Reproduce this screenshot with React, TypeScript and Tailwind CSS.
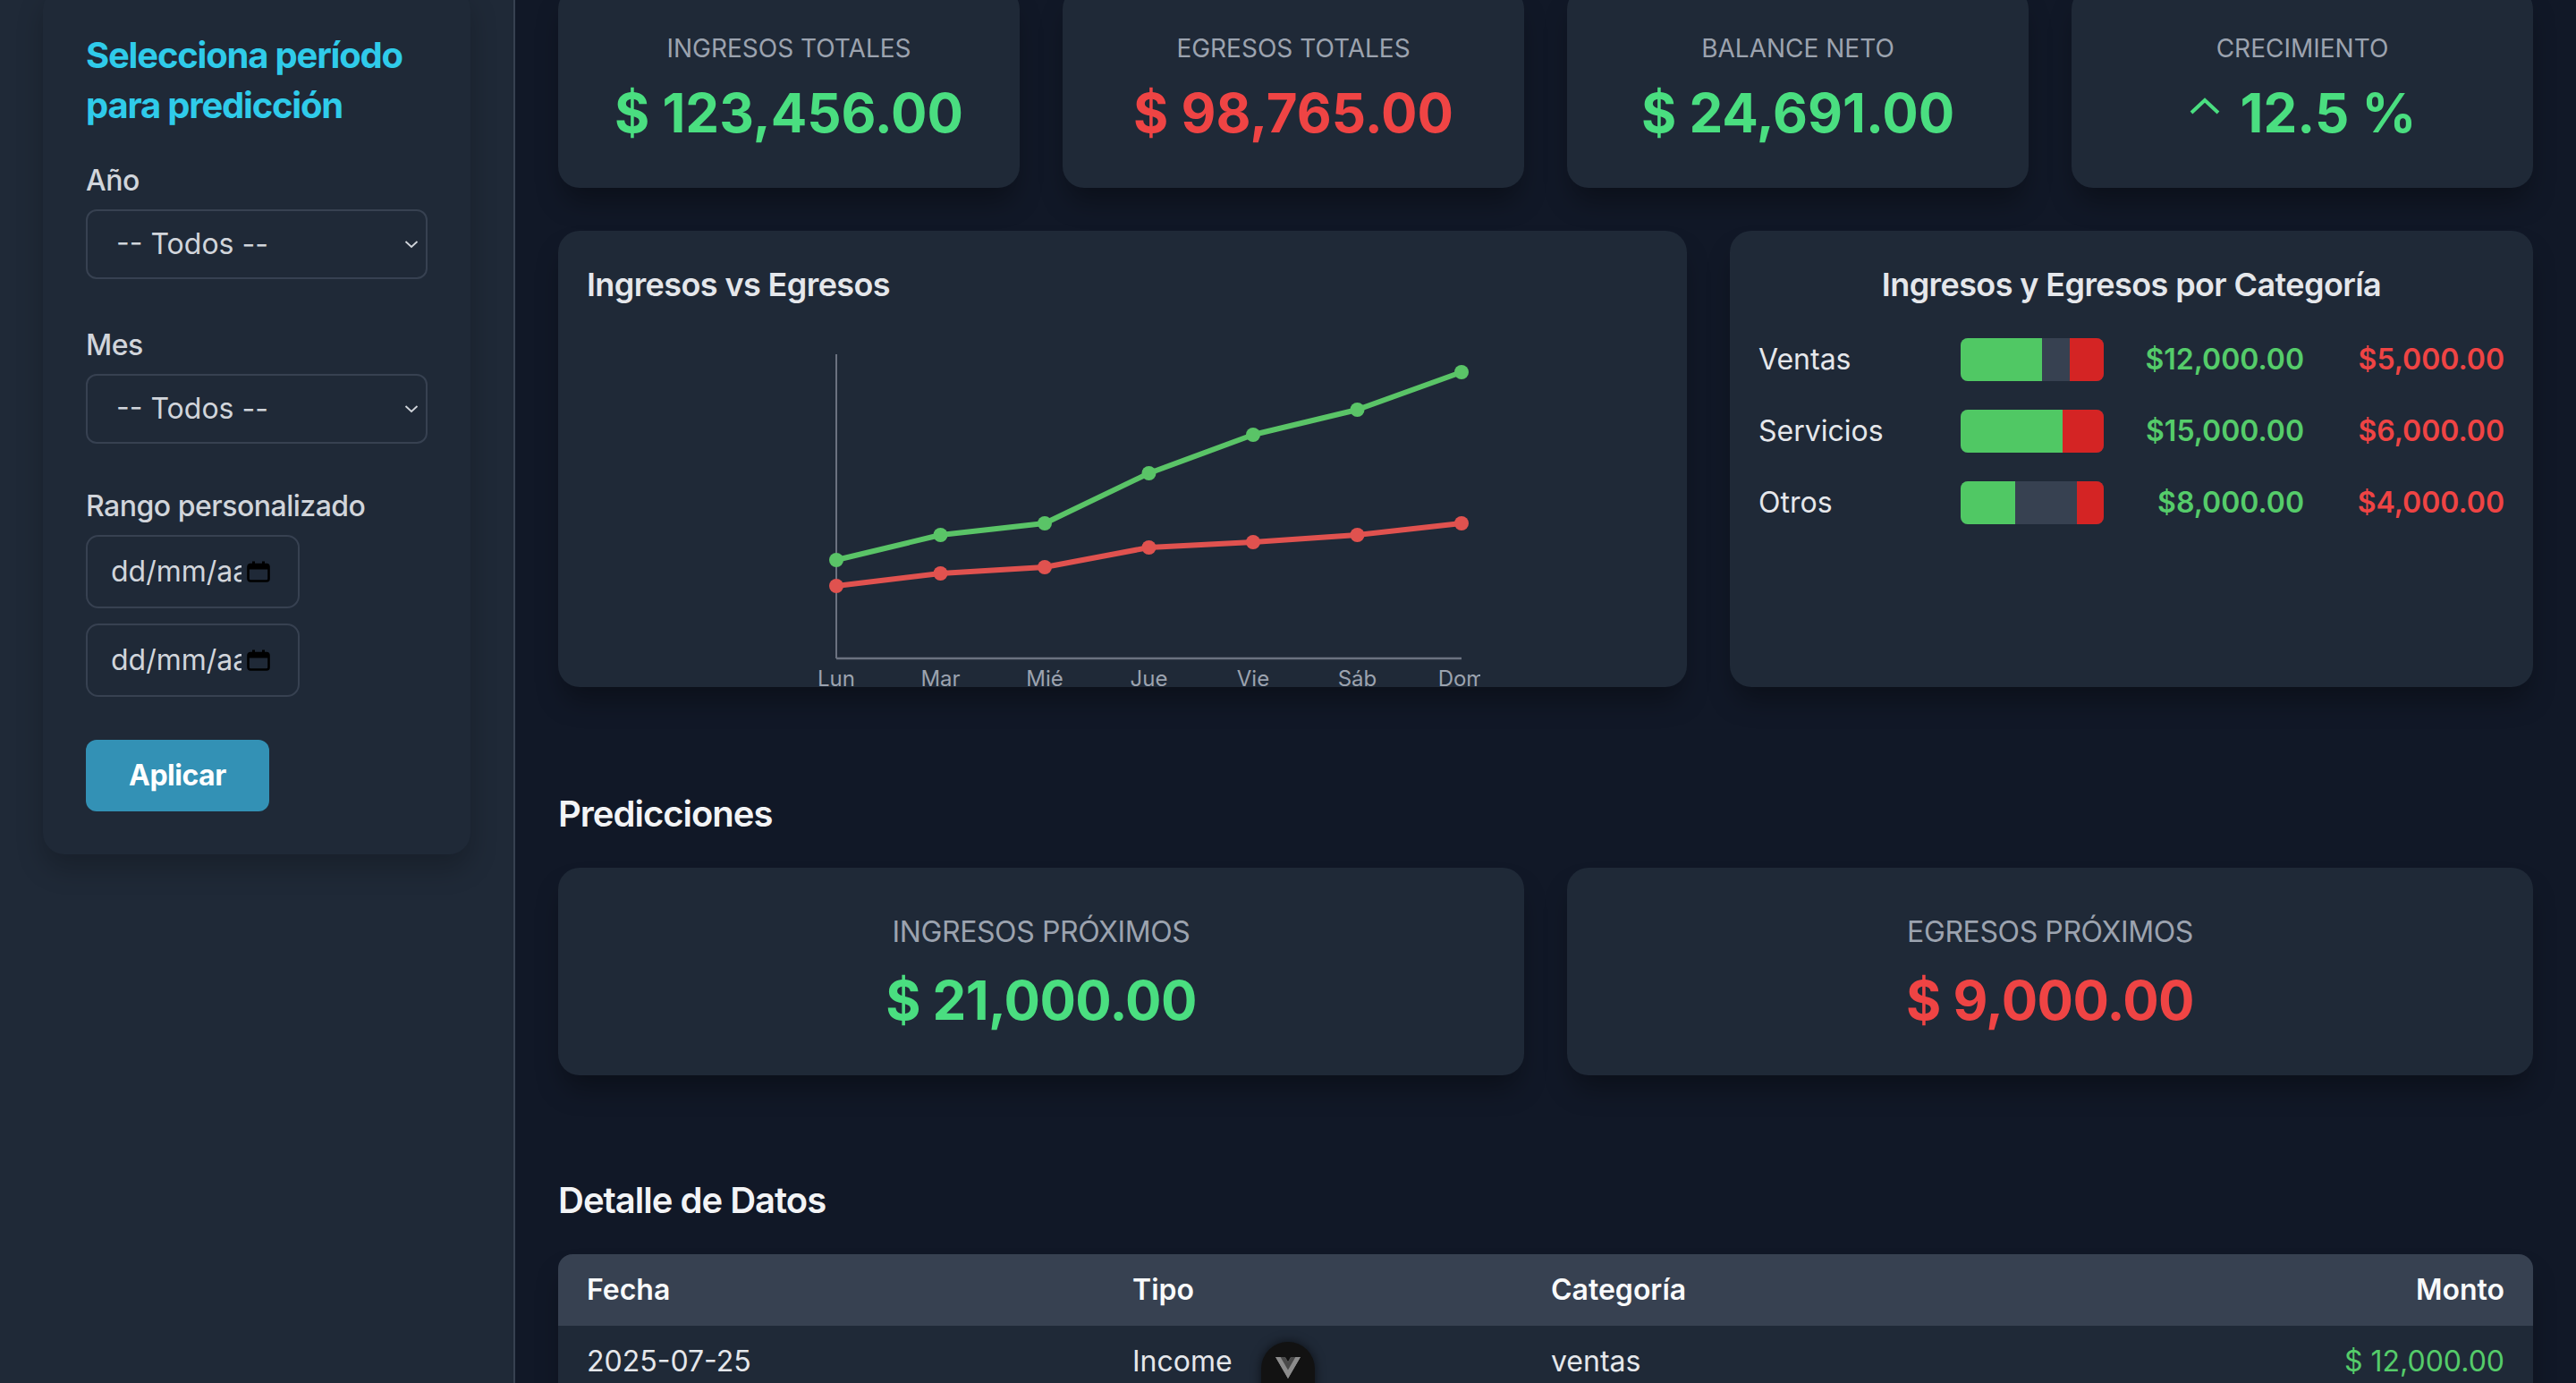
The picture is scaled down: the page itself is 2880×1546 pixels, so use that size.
import React from "react";

const stats = [
  { label: "Ingresos Totales", value: "$ 123,456.00", color: "text-[#4ade80]", up: false },
  { label: "Egresos Totales", value: "$ 98,765.00", color: "text-[#ef4444]", up: false },
  { label: "Balance Neto", value: "$ 24,691.00", color: "text-[#4ade80]", up: false },
  { label: "Crecimiento", value: "12.5 %", color: "text-[#4ade80]", up: true },
];

const categories = [
  { name: "Ventas", inc: 12000, exp: 5000 },
  { name: "Servicios", inc: 15000, exp: 6000 },
  { name: "Otros", inc: 8000, exp: 4000 },
];

const fmt = (n: number) =>
  "$" + n.toLocaleString("en-US", { minimumFractionDigits: 2, maximumFractionDigits: 2 });

const days = ["Lun", "Mar", "Mié", "Jue", "Vie", "Sáb", "Dom"];
const greenY = [270, 242, 229, 173, 130, 102, 60];
const redY = [299, 285, 278, 256, 250, 242, 229];
const xs = days.map((_, i) => 80 + i * 116.5);

function LineChart() {
  const gPts = xs.map((x, i) => `${x},${greenY[i]}`).join(" ");
  const rPts = xs.map((x, i) => `${x},${redY[i]}`).join(" ");
  return (
    <svg width="800" height="420" viewBox="0 0 800 420" className="block mx-auto mt-[10px]">
      <line x1="80" y1="40" x2="80" y2="380" stroke="#6b7280" strokeWidth="2" />
      <line x1="80" y1="380" x2="779" y2="380" stroke="#6b7280" strokeWidth="2.5" />
      <polyline points={gPts} fill="none" stroke="#5ac467" strokeWidth="6" strokeLinejoin="round" />
      <polyline points={rPts} fill="none" stroke="#e0524f" strokeWidth="6" strokeLinejoin="round" />
      {xs.map((x, i) => (
        <circle key={"g" + i} cx={x} cy={greenY[i]} r="8" fill="#5ac467" />
      ))}
      {xs.map((x, i) => (
        <circle key={"r" + i} cx={x} cy={redY[i]} r="8" fill="#e0524f" />
      ))}
      {xs.map((x, i) => (
        <text
          key={"t" + i}
          x={x}
          y="411"
          textAnchor="middle"
          fontSize="24"
          fill="#9ca3af"
          fontFamily="Inter, sans-serif"
        >
          {days[i]}
        </text>
      ))}
    </svg>
  );
}

function SelectBox() {
  return (
    <div className="relative">
      <select className="appearance-none w-full h-[78px] rounded-[12px] border-2 border-[#374151] bg-[#1f2937] px-[32px] text-[32px] text-[#d1d5db] outline-none">
        <option>-- Todos --</option>
      </select>
      <svg
        className="absolute right-[10px] top-1/2 -translate-y-1/2 pointer-events-none"
        width="16"
        height="10"
        viewBox="0 0 16 10"
      >
        <path d="M1.5 2 L8 8 L14.5 2" fill="none" stroke="#d1d5db" strokeWidth="1.8" />
      </svg>
    </div>
  );
}

function DateBox() {
  return (
    <div className="flex items-center w-[239px] h-[82px] rounded-[14px] border-2 border-[#374151] bg-[#1f2937] pl-[26px]">
      <span className="w-[146px] overflow-hidden whitespace-nowrap text-[32px] text-[#d1d5db]">dd/mm/aaaa</span>
      <svg width="26" height="24" viewBox="0 0 26 24" className="ml-[6px]">
        <rect x="1.5" y="4" width="23" height="18.5" rx="2.5" fill="none" stroke="#000" strokeWidth="2.6" />
        <rect x="1.5" y="4" width="23" height="5.5" fill="#000" />
        <rect x="6" y="0.5" width="3" height="5" fill="#000" />
        <rect x="17" y="0.5" width="3" height="5" fill="#000" />
      </svg>
    </div>
  );
}

function VueBadge() {
  return (
    <div className="fixed left-1/2 -translate-x-1/2 bottom-[-34px] w-[60px] h-[80px] rounded-full bg-[#121212] shadow-[0_0_12px_rgba(0,0,0,0.6)] flex justify-center pt-[17px]">
      <svg width="28" height="24" viewBox="0 0 256 221">
        <path fill="#8c8c8c" d="M204.8 0H256L128 220.8L0 0h97.92L128 51.2L157.44 0h47.36Z" />
        <path fill="#8c8c8c" d="m0 0l128 220.8L256 0h-51.2L128 132.48L50.56 0H0Z" />
        <path fill="#4a4a4a" d="M50.56 0L128 133.12L204.8 0h-47.36L128 51.2L97.92 0H50.56Z" />
      </svg>
    </div>
  );
}

const cardShadow = "shadow-[0_20px_30px_-6px_rgba(0,0,0,0.35)]";

export default function App() {
  const max = Math.max(...categories.map((c) => c.inc + c.exp));
  return (
    <div className="h-screen overflow-hidden bg-[#111827] font-['Inter',sans-serif]">
      <div className="flex -mt-[62px] min-h-[1800px]">
        <aside className="w-[576px] shrink-0 bg-[#1f2937] border-r-2 border-[#374151] px-[48px] pt-[48px]">
          <div className="rounded-[24px] bg-[#1f2937] shadow-[0_16px_30px_rgba(0,0,0,0.22)] p-[48px]">
            <h2 className="text-[40px] leading-[56px] font-bold tracking-[-1.2px] text-[#2fcbea] mb-[32px]">
              Selecciona período para predicción
            </h2>
            <div className="mb-[50px]">
              <label className="block text-[32px] leading-[48px] font-medium tracking-[-0.5px] text-[#d1d5db] mb-[8px]">
                Año
              </label>
              <SelectBox />
            </div>
            <div className="mb-[46px]">
              <label className="block text-[32px] leading-[48px] font-medium tracking-[-0.5px] text-[#d1d5db] mb-[8px]">
                Mes
              </label>
              <SelectBox />
            </div>
            <div className="mb-[48px]">
              <label className="block text-[32px] leading-[48px] font-medium tracking-[-0.5px] text-[#d1d5db] mb-[8px]">
                Rango personalizado
              </label>
              <div className="flex flex-col gap-[17px]">
                <DateBox />
                <DateBox />
              </div>
            </div>
            <button className="rounded-[12px] bg-[#3391b5] px-[48px] py-[16px] text-[32px] leading-[48px] font-bold tracking-[-0.5px] text-white">
              Aplicar
            </button>
          </div>
        </aside>

        <main className="flex-1 p-[48px]">
          <div className="grid grid-cols-4 gap-[48px]">
            {stats.map((s) => (
              <div key={s.label} className={`rounded-[24px] bg-[#1f2937] ${cardShadow} p-[48px] text-center`}>
                <div className="text-[28px] leading-[40px] uppercase text-[#9ca3af]">{s.label}</div>
                <div
                  className={`mt-[16px] flex items-center justify-center gap-[22px] text-[60px] leading-[72px] font-bold ${s.color}`}
                >
                  {s.up && (
                    <svg width="36" height="20" viewBox="0 0 36 20" className="-mt-[14px]">
                      <path d="M3 17 L18 3 L33 17" fill="none" stroke="#4ade80" strokeWidth="4" />
                    </svg>
                  )}
                  <span>{s.value}</span>
                </div>
              </div>
            ))}
          </div>

          <div className="mt-[48px] grid grid-cols-[1262px_1fr] gap-[48px]">
            <div className={`h-[510px] overflow-hidden rounded-[24px] bg-[#1f2937] ${cardShadow} p-[32px]`}>
              <h3 className="text-[36px] leading-[56px] font-semibold tracking-[-0.6px] text-[#e5e7eb]">
                Ingresos vs Egresos
              </h3>
              <LineChart />
            </div>
            <div className={`h-[510px] rounded-[24px] bg-[#1f2937] ${cardShadow} p-[32px]`}>
              <h3 className="text-center text-[36px] leading-[56px] font-semibold tracking-[-0.6px] text-[#e5e7eb] mb-[32px]">
                Ingresos y Egresos por Categoría
              </h3>
              <div className="flex flex-col gap-[32px]">
                {categories.map((c) => (
                  <div key={c.name} className="flex items-center h-[48px]">
                    <span className="flex-1 text-[32px] text-[#e5e7eb]">{c.name}</span>
                    <div className="w-[160px] h-[48px] rounded-[8px] bg-[#374151] overflow-hidden flex justify-between">
                      <div className="h-full bg-[#50c864]" style={{ width: `${(c.inc / max) * 100}%` }} />
                      <div className="h-full bg-[#d42424]" style={{ width: `${(c.exp / max) * 100}%` }} />
                    </div>
                    <span className="w-[224px] text-right text-[32px] font-semibold text-[#55cc6a]">{fmt(c.inc)}</span>
                    <span className="w-[224px] text-right text-[32px] font-semibold text-[#ef4444]">{fmt(c.exp)}</span>
                  </div>
                ))}
              </div>
            </div>
          </div>

          <h3 className="mt-[114px] mb-[32px] text-[40px] leading-[56px] font-semibold tracking-[-1px] text-[#f3f4f6]">
            Predicciones
          </h3>
          <div className="grid grid-cols-2 gap-[48px]">
            <div className={`rounded-[24px] bg-[#1f2937] ${cardShadow} p-[48px] text-center`}>
              <div className="text-[32px] leading-[48px] uppercase tracking-[-0.4px] text-[#9ca3af]">Ingresos próximos</div>
              <div className="mt-[16px] text-[60px] leading-[72px] font-bold tracking-[-0.6px] text-[#4ade80]">
                $ 21,000.00
              </div>
            </div>
            <div className={`rounded-[24px] bg-[#1f2937] ${cardShadow} p-[48px] text-center`}>
              <div className="text-[32px] leading-[48px] uppercase tracking-[-0.4px] text-[#9ca3af]">Egresos próximos</div>
              <div className="mt-[16px] text-[60px] leading-[72px] font-bold tracking-[-0.6px] text-[#ef4444]">
                $ 9,000.00
              </div>
            </div>
          </div>

          <h3 className="mt-[112px] mb-[32px] text-[40px] leading-[56px] font-semibold tracking-[-1px] text-[#f3f4f6]">
            Detalle de Datos
          </h3>
          <div className={`rounded-t-[16px] overflow-hidden ${cardShadow}`}>
            <table className="w-full table-fixed text-[32px] leading-[48px]">
              <colgroup>
                <col className="w-[610px]" />
                <col className="w-[468px]" />
                <col className="w-[700px]" />
                <col />
              </colgroup>
              <thead className="bg-[#374151]">
                <tr>
                  <th className="px-[32px] py-[16px] text-left font-semibold text-[#f9fafb]">Fecha</th>
                  <th className="px-[32px] py-[16px] text-left font-semibold text-[#f9fafb]">Tipo</th>
                  <th className="px-[32px] py-[16px] text-left font-semibold text-[#f9fafb]">Categoría</th>
                  <th className="px-[32px] py-[16px] text-right font-semibold text-[#f9fafb]">Monto</th>
                </tr>
              </thead>
              <tbody className="bg-[#1f2937] text-[#e5e7eb]">
                {[
                  ["2025-07-25", "Income", "ventas", "$ 12,000.00"],
                  ["2025-07-24", "Expense", "servicios", "$ 6,000.00"],
                  ["2025-07-23", "Income", "otros", "$ 8,000.00"],
                ].map((r) => (
                  <tr key={r[0]} className="border-b-2 border-[#374151]">
                    <td className="px-[32px] py-[16px]">{r[0]}</td>
                    <td className="px-[32px] py-[16px]">{r[1]}</td>
                    <td className="px-[32px] py-[16px]">{r[2]}</td>
                    <td
                      className={`px-[32px] py-[16px] text-right ${
                        r[1] === "Income" ? "text-[#55cc6a]" : "text-[#ef4444]"
                      }`}
                    >
                      {r[3]}
                    </td>
                  </tr>
                ))}
              </tbody>
            </table>
          </div>
        </main>
      </div>
      <VueBadge />
    </div>
  );
}
